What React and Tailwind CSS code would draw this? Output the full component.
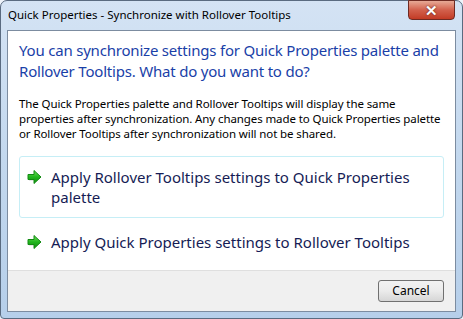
import React from "react";

function GreenArrow() {
  return (
    <svg width="16" height="16" viewBox="0 0 16 16" className="shrink-0">
      <defs>
        <linearGradient id="ga" x1="0" y1="0" x2="0" y2="1">
          <stop offset="0" stopColor="#6fe05c" />
          <stop offset="0.5" stopColor="#22b61e" />
          <stop offset="1" stopColor="#128a12" />
        </linearGradient>
      </defs>
      <path d="M2 9 h5" stroke="#d0d0d0" strokeWidth="6" opacity="0.5" />
      <path
        d="M1 5.5 H7 V1.5 L14 8 L7 14.5 V10.5 H1 Z"
        fill="url(#ga)"
        stroke="#138a13"
        strokeWidth="1"
        strokeLinejoin="round"
      />
    </svg>
  );
}

function CommandLink({ children, hot }) {
  return (
    <div
      className={
        "flex items-start gap-[8px] pl-[7px] pr-[10px] py-[10px] rounded-[3px] border " +
        (hot ? "border-[#c6eef6]" : "border-transparent")
      }
    >
      <div className="pt-[2px]">
        <GreenArrow />
      </div>
      <div className="text-[15px] leading-[20px] text-[#151c55]">{children}</div>
    </div>
  );
}

export default function App() {
  return (
    <div
      className="w-[463px] h-[319px] bg-[#eef3fa]"
      style={{ fontFamily: '"Noto Sans", "Open Sans", sans-serif' }}
    >
      <div className="w-[463px] h-[319px] flex flex-col rounded-t-[7px] rounded-b-[4px] border border-[#5a6b80] bg-gradient-to-b from-[#d4e3f4] via-[#c3d8ee] to-[#b6cfea]">
        <div className="h-[29px] flex items-start justify-between pl-[7px] pr-[7px]">
          <div className="pt-[6px] text-[11.5px] leading-[16px] text-[#000000]">
            Quick Properties - Synchronize with Rollover Tooltips
          </div>
          <div className="w-[47px] h-[20px] -mt-[1px] rounded-b-[4px] border border-[#6e2a22] bg-gradient-to-b from-[#e6a996] via-[#d2604c] to-[#c23a24] flex items-center justify-center">
            <span className="text-white text-[15px] font-bold leading-none [text-shadow:0_0_2px_#4a1008]">
              ✕
            </span>
          </div>
        </div>
        <div className="mx-[6px] mb-[6px] flex-1 flex flex-col border border-[#7c8ca0] bg-white">
          <div className="flex-1 flex flex-col px-[11px] pt-[9px]">
            <div className="text-[15px] leading-[21px] tracking-[-0.2px] text-[#1a3fa8] whitespace-nowrap">
              You can synchronize settings for Quick Properties palette and
              <br />
              Rollover Tooltips. What do you want to do?
            </div>
            <div className="mt-[14px] text-[11.5px] leading-[15px] tracking-[-0.1px] text-[#000000] whitespace-nowrap">
              The Quick Properties palette and Rollover Tooltips will display
              the same
              <br />
              properties after synchronization. Any changes made to Quick
              Properties palette
              <br />
              or Rollover Tooltips after synchronization will not be shared.
            </div>
            <div className="mt-[15px] flex flex-col gap-[3px]">
              <CommandLink hot>
                Apply Rollover Tooltips settings to Quick Properties
                <br />
                palette
              </CommandLink>
              <CommandLink>
                Apply Quick Properties settings to Rollover Tooltips
              </CommandLink>
            </div>
          </div>
          <div className="h-[41px] border-t border-[#dfdfdf] bg-[#f0f0f0] flex items-center justify-end pr-[11px]">
            <button className="w-[66px] h-[22px] rounded-[3px] border border-[#707070] bg-gradient-to-b from-[#f2f2f2] via-[#ebebeb] to-[#d6d6d6] text-[12px] text-[#000000] leading-none">
              Cancel
            </button>
          </div>
        </div>
      </div>
    </div>
  );
}
